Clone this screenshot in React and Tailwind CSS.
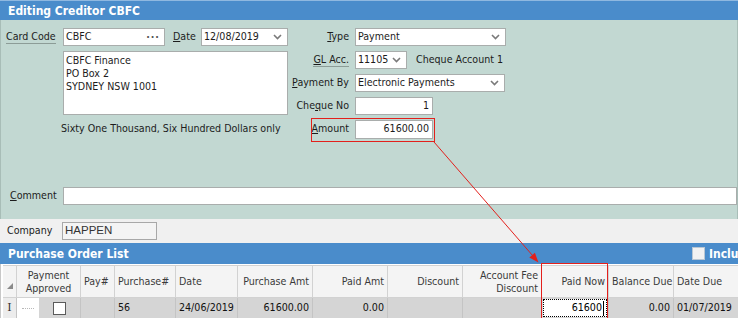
import React from 'react';

const ui = "font-['DejaVu_Sans_Condensed','DejaVu_Sans','Liberation_Sans',sans-serif]";

function Chevron() {
  return (
    <svg width="9" height="6" viewBox="0 0 9 6">
      <path d="M1 1l3.5 3.5L8 1" fill="none" stroke="#7a7a7a" strokeWidth="1.6" />
    </svg>
  );
}

function Field({ className = '', children }) {
  return (
    <div className={`h-[18px] bg-white border border-[#a9adac] flex items-center px-[2px] ${className}`}>
      {children}
    </div>
  );
}

function Select({ value, className }) {
  return (
    <Field className={`justify-between pr-[5px] ${className}`}>
      <span>{value}</span>
      <Chevron />
    </Field>
  );
}

function RightRow({ label, children }) {
  return (
    <div className="flex items-center h-[18px] whitespace-nowrap">
      <div className="w-[65px] pr-[6px] text-right">{label}</div>
      {children}
    </div>
  );
}

const columns = [
  { key: 'ind', w: 'w-[14px]' },
  { key: 'approved', w: 'w-[64px]', head: ['Payment', 'Approved'], align: 'justify-center text-center' },
  { key: 'pay', w: 'w-[34px]', head: ['Pay#'], align: 'justify-start pl-[3px]' },
  { key: 'purchase', w: 'w-[61px]', head: ['Purchase#'], align: 'justify-start pl-[3px]', value: '56' },
  { key: 'date', w: 'w-[62px]', head: ['Date'], align: 'justify-start pl-[3px]', value: '24/06/2019' },
  { key: 'pamt', w: 'w-[75px]', head: ['Purchase Amt'], align: 'justify-end text-right pr-[3px]', value: '61600.00' },
  { key: 'paid', w: 'w-[75px]', head: ['Paid Amt'], align: 'justify-end text-right pr-[3px]', value: '0.00' },
  { key: 'disc', w: 'w-[75px]', head: ['Discount'], align: 'justify-end text-right pr-[3px]', value: '' },
  { key: 'afd', w: 'w-[79px]', head: ['Account Fee', 'Discount'], align: 'justify-end text-right pr-[3px]', value: '' },
  { key: 'now', w: 'w-[67px]', head: ['Paid Now'], align: 'justify-end text-right pr-[3px]' },
  { key: 'bal', w: 'w-[65px]', head: ['Balance Due'], align: 'justify-start pl-[3px]', value: '0.00', rowAlign: 'justify-end pr-[3px]' },
  { key: 'due', w: 'w-[90px]', head: ['Date Due'], align: 'justify-start pl-[3px]', value: '01/07/2019' },
];

function HeaderCell({ col }) {
  if (col.key === 'ind') {
    return (
      <div className={`${col.w} shrink-0 h-full border-r border-[#d2d2d2] relative`}>
        <svg className="absolute left-[4px] bottom-[8px]" width="6" height="6" viewBox="0 0 6 6">
          <path d="M6 0V6H0Z" fill="#8a8a8a" />
        </svg>
      </div>
    );
  }
  return (
    <div className={`${col.w} shrink-0 h-full border-r border-[#d2d2d2] flex items-center whitespace-nowrap ${col.align} leading-[13px] text-[#3a3a3a]`}>
      <div>
        {col.head.map((line) => (
          <div key={line}>{line}</div>
        ))}
      </div>
    </div>
  );
}

function RowCell({ col }) {
  if (col.key === 'ind') {
    return (
      <div className={`${col.w} shrink-0 h-full border-r border-[#c4c4c4] bg-[#ececec] flex items-center justify-center font-['DejaVu_Serif',serif] text-[11px] text-[#333]`}>
        I
      </div>
    );
  }
  if (col.key === 'approved') {
    return (
      <div className={`${col.w} shrink-0 h-full border-r border-[#c4c4c4] flex items-center`}>
        <div className="w-[22px] h-full bg-white flex items-center justify-center">
          <div className="w-[12px] border-t border-dotted border-[#b8b8b8]" />
        </div>
        <div className="ml-[14px] w-[13px] h-[13px] bg-white border border-[#5a5a5a]" />
      </div>
    );
  }
  if (col.key === 'now') {
    return (
      <div className={`${col.w} shrink-0 h-full border-r border-[#c4c4c4] p-[1px]`}>
        <div className="h-full bg-white border border-dotted border-black flex items-center justify-end pr-[2px]">
          <span className="text-black">61600</span>
          <span className="w-[1px] h-[15px] bg-black ml-[1px]" />
        </div>
      </div>
    );
  }
  return (
    <div className={`${col.w} shrink-0 h-full border-r border-[#c4c4c4] flex items-center ${col.rowAlign || col.align} text-[#111]`}>
      {col.value}
    </div>
  );
}

function Overlay() {
  return (
    <svg className="absolute inset-0 pointer-events-none" width="738" height="318" viewBox="0 0 738 318">
      <rect x="311.5" y="118.5" width="123" height="23" fill="none" stroke="#e3201c" strokeWidth="1" />
      <rect x="541.5" y="263.5" width="66" height="60" fill="none" stroke="#e3201c" strokeWidth="1" />
      <line x1="434" y1="142" x2="533" y2="256" stroke="#e3201c" strokeWidth="1" />
      <path d="M538.5 262.5L529.3 257.6L534.9 252.8Z" fill="#e3201c" />
    </svg>
  );
}

export default function App() {
  return (
    <div className={`relative w-[738px] h-[318px] overflow-hidden bg-[#f0f0f0] text-[10.6px] text-[#1c1c1c] ${ui}`}>
      {/* title */}
      <div className="h-[20px] bg-[#4a8ccb] border-t border-[#8fb8e0] flex items-center pl-[8px] text-white font-bold text-[12px]">
        Editing Creditor CBFC
      </div>

      {/* form */}
      <div className="h-[199px] bg-[#c2d8d2] border-x border-[#a8bdb7]">
        <div className="h-[167px] pt-[8px] flex">
          <div className="w-[289px] shrink-0">
            <div className="flex items-center h-[18px]">
              <div className="w-[62px] pl-[5px]">
                <span className="border-b border-[#8c9c97] pb-[1px]">Card Code</span>
              </div>
              <Field className="w-[102px] justify-between pr-[4px]">
                <span>CBFC</span>
                <span className="tracking-[1px] text-[#555] font-bold leading-none">···</span>
              </Field>
              <div className="w-[36px] pl-[8px]">
                <u>D</u>ate
              </div>
              <Select value="12/08/2019" className="w-[87px]" />
            </div>
            <div className="ml-[62px] mt-[5px] w-[225px] h-[64px] bg-white border border-[#a9adac] pl-[2px] pt-[2px] leading-[13px]">
              <div>CBFC Finance</div>
              <div>PO Box 2</div>
              <div>SYDNEY NSW 1001</div>
            </div>
            <div className="ml-[60px] mt-[7px] leading-[13px] whitespace-nowrap">Sixty One Thousand, Six Hundred Dollars only</div>
          </div>

          <div className="flex flex-col gap-[5px]">
            <RightRow label={<><u>T</u>ype</>}>
              <Select value="Payment" className="w-[151px]" />
            </RightRow>
            <RightRow label={<span className="border-b border-[#8c9c97] pb-[1px]"><u>G</u>L Acc.</span>}>
              <Select value="11105" className="w-[52px]" />
              <span className="ml-[9px]">Cheque Account 1</span>
            </RightRow>
            <RightRow label={<><u>P</u>ayment By</>}>
              <Select value="Electronic Payments" className="w-[150px]" />
            </RightRow>
            <RightRow label={<>Che<u>q</u>ue No</>}>
              <Field className="w-[78px] justify-end pr-[3px]">1</Field>
            </RightRow>
            <RightRow label={<><u>A</u>mount</>}>
              <Field className="w-[78px] h-[19px] justify-end pr-[3px]">61600.00</Field>
            </RightRow>
          </div>
        </div>

        <div className="flex items-center h-[18px]">
          <div className="w-[62px] pl-[9px]">
            <u>C</u>omment
          </div>
          <Field className="flex-1" />
        </div>
      </div>

      {/* company */}
      <div className="h-[24px] flex items-center">
        <div className="w-[62px] pl-[7px]">Company</div>
        <div className="w-[95px] h-[18px] bg-[#f4f4f4] border border-[#a8a8a8] flex items-center pl-[2px] font-['Liberation_Sans_Narrow','Liberation_Sans',sans-serif] text-[11.5px] text-[#333]">
          HAPPEN
        </div>
      </div>

      {/* purchase order list bar */}
      <div className="h-[21px] bg-[#4a8ccb] flex items-center justify-between pl-[8px] text-white font-bold text-[12px] whitespace-nowrap">
        <span>Purchase Order List</span>
        <div className="flex items-center w-[46px] overflow-hidden">
          <div className="w-[13px] h-[13px] bg-[#f2f2f2] border border-[#b9c7d4] shrink-0" />
          <span className="ml-[4px]">Include Closed</span>
        </div>
      </div>

      {/* grid */}
      <div className="h-[54px] bg-white pl-[2px] pt-[1px] border-l border-[#c8c8c8]">
        <div className="h-[33px] flex bg-[#f4f4f4] border-y border-[#d2d2d2]">
          {columns.map((c) => (
            <HeaderCell key={c.key} col={c} />
          ))}
        </div>
        <div className="h-[20px] flex bg-[#d5d5d5]">
          {columns.map((c) => (
            <RowCell key={c.key} col={c} />
          ))}
        </div>
      </div>

      <Overlay />
    </div>
  );
}
